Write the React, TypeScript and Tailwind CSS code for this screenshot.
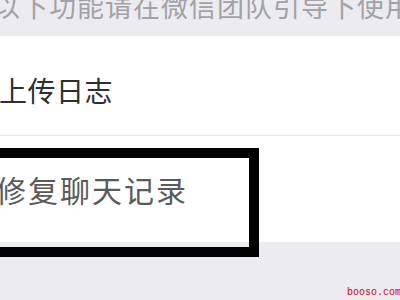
export default function App() {
  return (
    <div className="relative h-[300px] w-[400px] overflow-hidden bg-[#ecebef] font-['Noto_Sans_CJK_SC',sans-serif]">
      {/* section hint, cut off at the top of the shot */}
      <div className="h-[36px] overflow-hidden">
        <p className="-ml-[7px] -mt-[12px] whitespace-nowrap text-[27px] leading-[36px] tracking-[1px] text-[#a3a2a6]">
          以下功能请在微信团队引导下使用
        </p>
      </div>

      <div className="bg-white">
        <div className="flex h-[100px] items-center border-b border-[#e6e6e8]">
          <span className="-ml-[1px] pt-[8px] text-[28px] leading-none tracking-[0.5px] text-[#2f2f2f]">上传日志</span>
        </div>
        <div className="flex h-[106px] items-center">
          <span className="-ml-[4px] text-[30px] leading-none tracking-[2px] text-[#5a5a5a]">修复聊天记录</span>
        </div>
      </div>

      {/* annotation box drawn over the row */}
      <div className="absolute left-[-12px] top-[148px] h-[109px] w-[271px] border-[10px] border-black" />

      <span className="absolute bottom-[2px] right-[-1px] font-['Liberation_Mono',monospace] text-[10px] leading-none text-[#e0000c]">
        booso.com
      </span>
    </div>
  );
}
